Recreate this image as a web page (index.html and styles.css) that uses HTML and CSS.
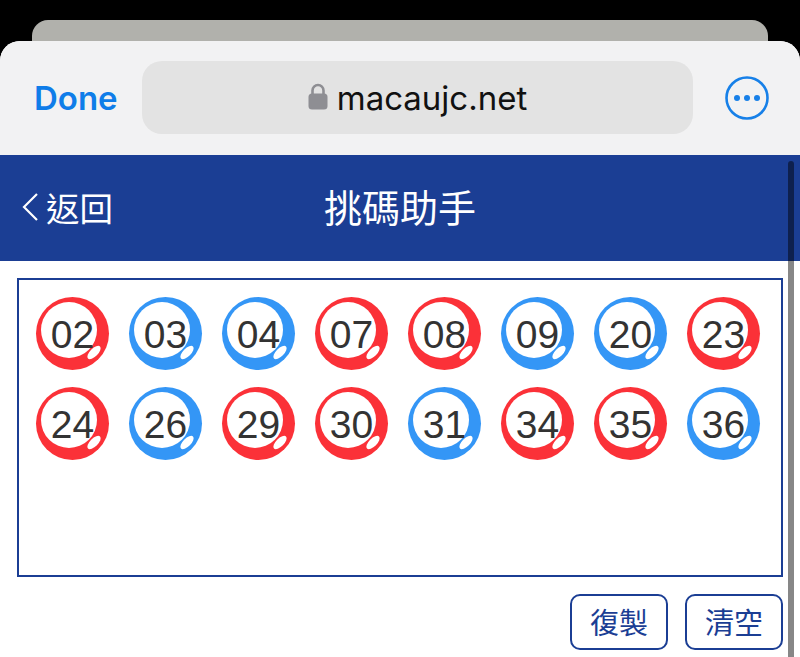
FILE: index.html
```html
<!DOCTYPE html>
<html lang="zh-Hant">
<head>
  <meta charset="UTF-8">
  <title>挑碼助手</title>
  <link rel="stylesheet" href="styles.css">
</head>
<body>
  <div class="back-card"></div>
  <div class="sheet">
    <div class="toolbar">
      <span class="done">Done</span>
      <div class="url-bar">
        <svg class="lock" width="20" height="27" viewBox="0 0 20 27">
          <path d="M4.5 12V7.5a5.5 5.5 0 0 1 11 0V12" fill="none" stroke="#8e8e93" stroke-width="2.6"/>
          <rect x="0.5" y="10.5" width="19" height="16" rx="3.5" fill="#8e8e93"/>
        </svg>
        <span class="host">macaujc.net</span>
      </div>
      <svg class="more" width="44" height="44" viewBox="0 0 44 44">
        <circle cx="22" cy="22" r="20.5" fill="none" stroke="#1780e8" stroke-width="2.6"/>
        <circle cx="12" cy="22" r="3" fill="#1780e8"/>
        <circle cx="22" cy="22" r="3" fill="#1780e8"/>
        <circle cx="32" cy="22" r="3" fill="#1780e8"/>
      </svg>
    </div>

    <div class="page">
      <div class="scroll-thumb"></div>
      <header class="header">
        <a class="back">
          <svg width="18" height="30" viewBox="0 0 18 30">
            <path d="M16 2 3 15l13 13" fill="none" stroke="#fff" stroke-width="2.2"/>
          </svg>
          返回
        </a>
        <h1>挑碼助手</h1>
      </header>

      <div class="content">
        <div class="picks">
          <div class="ball red">02</div>
          <div class="ball blue">03</div>
          <div class="ball blue">04</div>
          <div class="ball red">07</div>
          <div class="ball red">08</div>
          <div class="ball blue">09</div>
          <div class="ball blue">20</div>
          <div class="ball red">23</div>
          <div class="ball red">24</div>
          <div class="ball blue">26</div>
          <div class="ball red">29</div>
          <div class="ball red">30</div>
          <div class="ball blue">31</div>
          <div class="ball red">34</div>
          <div class="ball red">35</div>
          <div class="ball blue">36</div>
        </div>
        <div class="actions">
          <button class="btn">復製</button>
          <button class="btn">清空</button>
        </div>
      </div>
    </div>
  </div>
</body>
</html>
```

FILE: styles.css
```css
html, body {
  margin: 0;
  height: 657px;
  overflow: hidden;
}
body {
  background-color: #000;
  padding-top: 20px;
  box-sizing: border-box;
  font-family: "Liberation Sans", "Noto Sans CJK TC", sans-serif;
}
.back-card {
  height: 21px;
  margin: 0 32px;
  background-color: #b1b1ac;
  border-radius: 16px 16px 0 0;
}
.sheet {
  height: 616px;
  background-color: #fff;
  border-radius: 20px 20px 0 0;
  overflow: hidden;
}
.toolbar {
  height: 114px;
  background-color: #f2f2f3;
  display: flex;
  align-items: center;
  padding: 0 25px 0 34px;
}
.done {
  width: 108px;
  color: #0f7de9;
  font-family: Inter, sans-serif;
  font-size: 33px;
  font-weight: 600;
}
.url-bar {
  width: 551px;
  height: 73px;
  margin-right: 32px;
  margin-bottom: 1px;
  background-color: #e3e3e3;
  border-radius: 20px;
  display: flex;
  align-items: center;
  justify-content: center;
  gap: 9px;
}
.lock {
  margin-bottom: 2px;
}
.host {
  color: #111;
  font-family: Inter, sans-serif;
  font-size: 33px;
}
.page {
  position: relative;
}
.scroll-thumb {
  position: absolute;
  z-index: 1;
  top: 6px;
  right: 6px;
  width: 6px;
  height: 520px;
  border-radius: 3px 3px 0 0;
  background-color: rgba(0, 0, 0, 0.47);
}
.header {
  height: 106px;
  background-color: #1b3e94;
  color: #fff;
  display: flex;
  align-items: center;
  justify-content: center;
  position: relative;
}
.header h1 {
  margin: 0 0 5px;
  font-size: 38px;
  font-weight: 400;
  font-family: "Noto Sans CJK TC", sans-serif;
}
.back {
  position: absolute;
  left: 21px;
  top: 0;
  height: 100%;
  box-sizing: border-box;
  padding-bottom: 3px;
  display: flex;
  align-items: center;
  gap: 7px;
  font-size: 33.5px;
  font-family: "Noto Sans CJK TC", sans-serif;
}
.content {
  padding: 17px 17px 0;
}
.picks {
  height: 299px;
  box-sizing: border-box;
  border: 2px solid #1b3e94;
  padding: 17px 0 0 17px;
  display: grid;
  grid-template-columns: repeat(8, 73px);
  grid-auto-rows: 73px;
  column-gap: 20px;
  row-gap: 17px;
  align-content: start;
}
.ball {
  position: relative;
  z-index: 0;
  border-radius: 50%;
  display: flex;
  align-items: center;
  justify-content: center;
  color: #333;
  font-size: 39px;
  line-height: 1;
  padding-top: 1px;
  box-sizing: border-box;
}
.ball.red {
  background-color: #fb3138;
}
.ball.blue {
  background-color: #3496f6;
}
.ball::before {
  content: "";
  position: absolute;
  left: 5px;
  top: 5px;
  width: 56px;
  height: 56px;
  border-radius: 50%;
  background-color: #fff;
  z-index: -1;
}
.ball::after {
  content: "";
  position: absolute;
  left: 54px;
  top: 47px;
  width: 8px;
  height: 17px;
  border-radius: 50%;
  background-color: #fff;
  transform: rotate(45deg);
}
.actions {
  display: flex;
  justify-content: flex-end;
  gap: 17px;
  margin-top: 17px;
}
.btn {
  width: 98px;
  height: 56px;
  padding: 0 0 3px;
  box-sizing: border-box;
  background-color: #fff;
  border: 2px solid #1b3e94;
  border-radius: 10px;
  color: #1b3e94;
  font-family: "Noto Sans CJK TC", sans-serif;
  font-size: 29px;
}
```
